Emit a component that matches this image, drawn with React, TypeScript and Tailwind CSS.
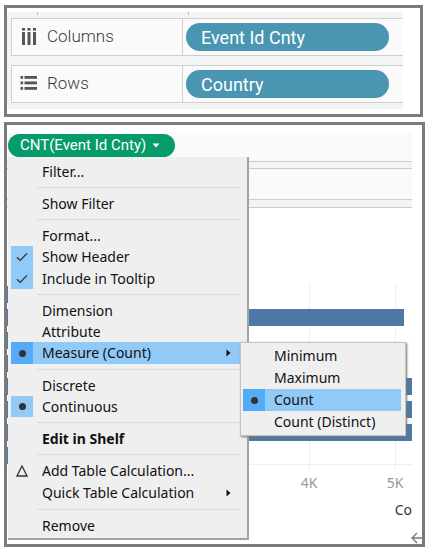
import React from "react";

type Mark = "check" | "dot" | "delta";

function MarkIcon({ mark }: { mark: Mark }) {
  if (mark === "check") {
    return (
      <svg width="12" height="10" viewBox="0 0 12 10" fill="none" stroke="#333" strokeWidth="1.3">
        <path d="M1 5.2 4.2 8.4 11 1.4" />
      </svg>
    );
  }
  if (mark === "dot") {
    return <span className="h-[7px] w-[7px] rounded-full bg-[#333]" />;
  }
  return (
    <svg width="12" height="12" viewBox="0 0 12 12" fill="none" stroke="#333" strokeWidth="1.3">
      <path d="M6 1 11 11H1Z" />
    </svg>
  );
}

function MenuItem({
  label,
  mark,
  active = false,
  submenu = false,
  bold = false,
  height = "h-[21px]",
}: {
  label: string;
  mark?: Mark;
  active?: boolean;
  submenu?: boolean;
  bold?: boolean;
  height?: string;
}) {
  const cell = mark && mark !== "delta" ? (active ? "bg-[#55abf7]" : "bg-[#91c9f7]") : "";
  return (
    <button
      type="button"
      role="menuitem"
      className={`flex w-full items-center text-left text-[14px] leading-5 whitespace-nowrap text-[#111] ${height} ${active ? "bg-[#91c9f7]" : ""} ${bold ? "font-bold" : ""}`}
    >
      <span className={`flex h-full w-[22px] shrink-0 items-center justify-center ${cell}`}>
        {mark && <MarkIcon mark={mark} />}
      </span>
      <span className="flex-1 pl-[9px]">{label}</span>
      {submenu && (
        <svg className="mr-3" width="5" height="8" viewBox="0 0 5 8" fill="#111">
          <path d="M0.5 0.5 4.5 4 0.5 7.5Z" />
        </svg>
      )}
    </button>
  );
}

function Separator() {
  return (
    <div role="separator" className="flex h-[11px] items-center pr-0.5 pl-[26px]">
      <div className="h-px w-full bg-[#dcdcdc]" />
    </div>
  );
}

function Shelf({ name, field, icon }: { name: string; field: string; icon: React.ReactNode }) {
  return (
    <div className="flex h-[38px] border-y border-l border-[#cfcfcf] bg-[#fafafa]">
      <div className="flex w-[171px] shrink-0 items-center border-r border-[#cfcfcf] pl-2 text-[17px] text-[#3a3a3a]">
        {icon}
        <span className="pl-[9px] font-light">{name}</span>
      </div>
      <div className="flex flex-1 items-center pr-[14px] pl-[3px]">
        <button
          type="button"
          className="h-7 w-full rounded-full bg-[#4995b2] pl-[15px] text-left text-[18px] text-white"
        >
          {field}
        </button>
      </div>
    </div>
  );
}

function ColumnsIcon() {
  return (
    <svg width="18" height="18" viewBox="0 0 18 18" fill="#555">
      {[2, 7.5, 13].map((x) => (
        <g key={x}>
          <rect x={x} y="0" width="3" height="2.6" />
          <rect x={x} y="4" width="3" height="13" />
        </g>
      ))}
    </svg>
  );
}

function RowsIcon() {
  return (
    <svg width="18" height="18" viewBox="0 0 18 18" fill="#555">
      {[1, 6.5, 12].map((y) => (
        <g key={y}>
          <rect x="0.5" y={y} width="2.6" height="2.8" />
          <rect x="4.5" y={y} width="12.5" height="2.8" />
        </g>
      ))}
    </svg>
  );
}

const bars = ["w-1/4", "w-[98%]", "w-1/4", "w-1/4", "w-full", "w-full", "w-full", "w-1/4"];

export default function App() {
  return (
    <main className="bg-white pt-[5px] pb-1 pl-1 font-['Roboto',sans-serif]">
      <section className="mr-[10px] border-[3px] border-[#7b7b7b] pt-1 pr-[17px] pb-[5px]">
        <div className="bg-[#f4f4f4] pb-1.5 pl-1">
          <div className="flex h-1.5 items-start pl-[26px]">
            <span className="h-[3px] w-px bg-[#bbb]" />
            <span className="ml-[150px] h-[3px] w-px bg-[#bbb]" />
          </div>
          <div className="flex flex-col gap-[9px]">
            <Shelf name="Columns" field="Event Id Cnty" icon={<ColumnsIcon />} />
            <Shelf name="Rows" field="Country" icon={<RowsIcon />} />
          </div>
        </div>
      </section>

      <section className="relative mt-[5px] mr-2 border-[3px] border-[#7b7b7b] pt-2">
        <div className="mr-[10px]">
          <div className="h-7 bg-[#fafafa] pt-px pl-px">
            <button
              type="button"
              className="flex h-[23px] w-[167px] items-center rounded-full bg-[#069b6b] pl-3 text-[15px] text-white"
            >
              CNT(Event Id Cnty)
              <svg className="ml-1.5" width="8" height="5" viewBox="0 0 8 5" fill="#fff">
                <path d="M0.5 0.5H7.5L4 4.5Z" />
              </svg>
            </button>
          </div>
          <div className="h-2 border-y border-[#cacaca] bg-[#f4f4f4]" />
          <div className="h-[30px] bg-[#fafafa]" />
          <div className="h-[9px] border-y border-[#cdcdcd] bg-[#f4f4f4]" />
        </div>

        <div className="relative mt-[76px] mr-[10px] h-[187px] pt-0.5">
          <div className="absolute inset-0 flex">
            <div className="flex-1 border-r border-[#efefef]" />
            <div className="w-[86px] border-r border-[#efefef]" />
            <div className="w-4" />
          </div>
          <div className="relative flex h-[179px] flex-col gap-1.5 border-b border-[#efefef]">
            {bars.map((width, i) => (
              <div key={i} className={`h-[17px] shrink-0 bg-[#4e79a7] ${width}`} />
            ))}
          </div>
        </div>

        <div className="-mr-4 flex justify-end pt-0.5 font-['Noto_Sans',sans-serif] text-[14px] leading-5 text-[#999]">
          <span className="w-[86px] text-center">4K</span>
          <span className="w-[86px] text-center">5K</span>
        </div>
        <div className="mr-[10px] pt-[7px] text-right font-['Noto_Sans',sans-serif] text-[14px] leading-5 text-[#333]">
          Co
        </div>
        <div className="flex h-6 items-end justify-end">
          <svg width="11" height="12" viewBox="0 0 11 12" fill="none" stroke="#777" strokeWidth="1.3">
            <path d="M11 6H1M6 1 1 6l5 5" />
          </svg>
        </div>

        <div
          role="menu"
          className="absolute top-8 left-px w-[241px] border-r-2 border-b-2 border-[#a3a3a3] bg-[#efefef] pt-1 pr-1 pb-0.5 pl-[3px] font-['Noto_Sans',sans-serif]"
        >
          <MenuItem label="Filter..." />
          <Separator />
          <MenuItem label="Show Filter" />
          <Separator />
          <MenuItem label="Format..." />
          <MenuItem label="Show Header" mark="check" height="h-[22px]" />
          <MenuItem label="Include in Tooltip" mark="check" />
          <Separator />
          <MenuItem label="Dimension" />
          <MenuItem label="Attribute" />
          <MenuItem label="Measure (Count)" mark="dot" active submenu height="h-[22px]" />
          <Separator />
          <MenuItem label="Discrete" />
          <MenuItem label="Continuous" mark="dot" />
          <Separator />
          <MenuItem label="Edit in Shelf" bold />
          <Separator />
          <MenuItem label="Add Table Calculation..." mark="delta" height="h-[22px]" />
          <MenuItem label="Quick Table Calculation" submenu height="h-[22px]" />
          <Separator />
          <MenuItem label="Remove" />
        </div>

        <div
          role="menu"
          className="absolute top-[217px] left-[233px] w-[166px] border border-[#c4c4c4] bg-[#efefef] pt-0.5 pr-1 pb-0.5 pl-0.5 font-['Noto_Sans',sans-serif] shadow-[1px_1px_2px_#777]"
        >
          <MenuItem label="Minimum" height="h-[22px]" />
          <MenuItem label="Maximum" height="h-[22px]" />
          <MenuItem label="Count" mark="dot" active height="h-[22px]" />
          <MenuItem label="Count (Distinct)" height="h-[22px]" />
        </div>
      </section>
    </main>
  );
}
